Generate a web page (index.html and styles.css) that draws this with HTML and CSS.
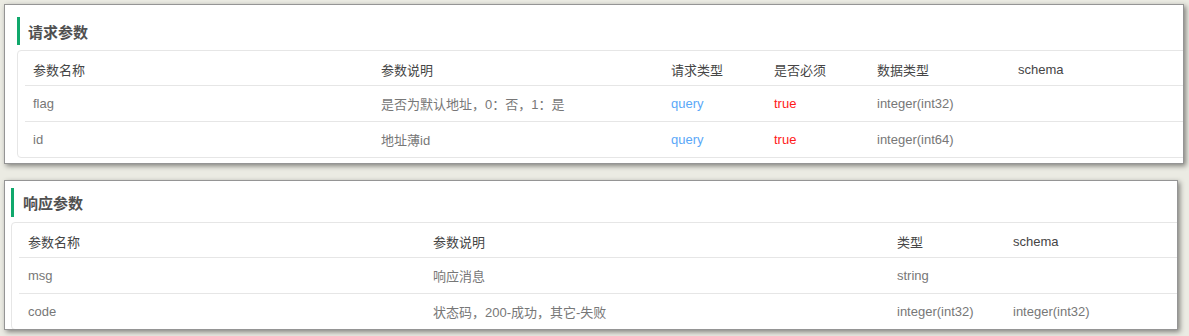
FILE: index.html
```html
<!DOCTYPE html>
<html lang="zh-CN">
<head>
<meta charset="utf-8">
<title>参数</title>
<link rel="stylesheet" href="styles.css">
</head>
<body>
<div class="page">
  <section class="card card-req">
    <div class="title"><span class="bar"></span><h2>请求参数</h2></div>
    <div class="tbox">
      <div class="row head">
        <div>参数名称</div><div>参数说明</div><div>请求类型</div><div>是否必须</div><div>数据类型</div><div>schema</div>
      </div>
      <div class="row">
        <div>flag</div><div>是否为默认地址，0：否，1：是</div><div class="q">query</div><div class="t">true</div><div>integer(int32)</div><div></div>
      </div>
      <div class="row">
        <div>id</div><div>地址薄id</div><div class="q">query</div><div class="t">true</div><div>integer(int64)</div><div></div>
      </div>
    </div>
  </section>
  <section class="card card-res">
    <div class="title"><span class="bar"></span><h2>响应参数</h2></div>
    <div class="tbox">
      <div class="row head">
        <div>参数名称</div><div>参数说明</div><div>类型</div><div>schema</div>
      </div>
      <div class="row">
        <div>msg</div><div>响应消息</div><div>string</div><div></div>
      </div>
      <div class="row">
        <div>code</div><div>状态码，200-成功，其它-失败</div><div>integer(int32)</div><div>integer(int32)</div>
      </div>
    </div>
  </section>
</div>
</body>
</html>
```
FILE: styles.css
```css
html, body {
  margin: 0;
  padding: 0;
}
body {
  background: #ebebe3;
  font-family: "Liberation Sans", Arial, "Noto Sans CJK SC", sans-serif;
  font-size: 13px;
  color: #777;
  width: 1189px;
  height: 336px;
  overflow: hidden;
}
.page {
  display: flex;
  flex-direction: column;
  align-items: flex-start;
  gap: 16px;
  padding: 4px 0 0 4px;
}
.card {
  background: #fff;
  border: 1px solid #959595;
  box-shadow: 2px 2px 5px rgba(0, 0, 0, 0.45);
  box-sizing: border-box;
  overflow: hidden;
}
.card-req {
  width: 1180px;
  height: 160px;
}
.card-res {
  width: 1174px;
  height: 150px;
}
.title {
  display: flex;
  align-items: center;
}
.bar {
  display: block;
  width: 3px;
  height: 28px;
  background: #10a86c;
}
.title h2 {
  margin: 0;
  font-size: 15px;
  font-weight: bold;
  color: #505050;
}
.card-req .title {
  margin: 12px 0 0 12px;
}
.card-req .title h2 {
  margin-left: 8px;
}
.card-res .title {
  margin: 7px 0 0 6px;
}
.card-res .bar {
  height: 29px;
}
.card-res .title h2 {
  margin-left: 9px;
}
.tbox {
  border: 1px solid #e6e6e6;
  border-radius: 4px;
  width: 1400px;
  box-sizing: border-box;
}
.card-req .tbox {
  margin: 5px 0 0 12px;
  padding-left: 7px;
}
.card-res .tbox {
  margin: 5px 0 0 6px;
  padding-left: 7px;
}
.row {
  display: grid;
  align-items: center;
  height: 35px;
  border-top: 1px solid #e6e6e6;
}
.row.head {
  height: 34px;
  border-top: none;
  color: #454545;
  padding-top: 2px;
  box-sizing: border-box;
}
.row > div {
  padding-left: 8px;
  white-space: nowrap;
}
.card-req .row {
  grid-template-columns: 348px 290px 103px 103px 141px 1fr;
}
.card-res .row {
  grid-template-columns: 405px 464px 116px 1fr;
}
.card-res .row > div {
  padding-left: 9px;
}
.q {
  color: #5aa8f8;
}
.t {
  color: #ff1a1a;
}
```
